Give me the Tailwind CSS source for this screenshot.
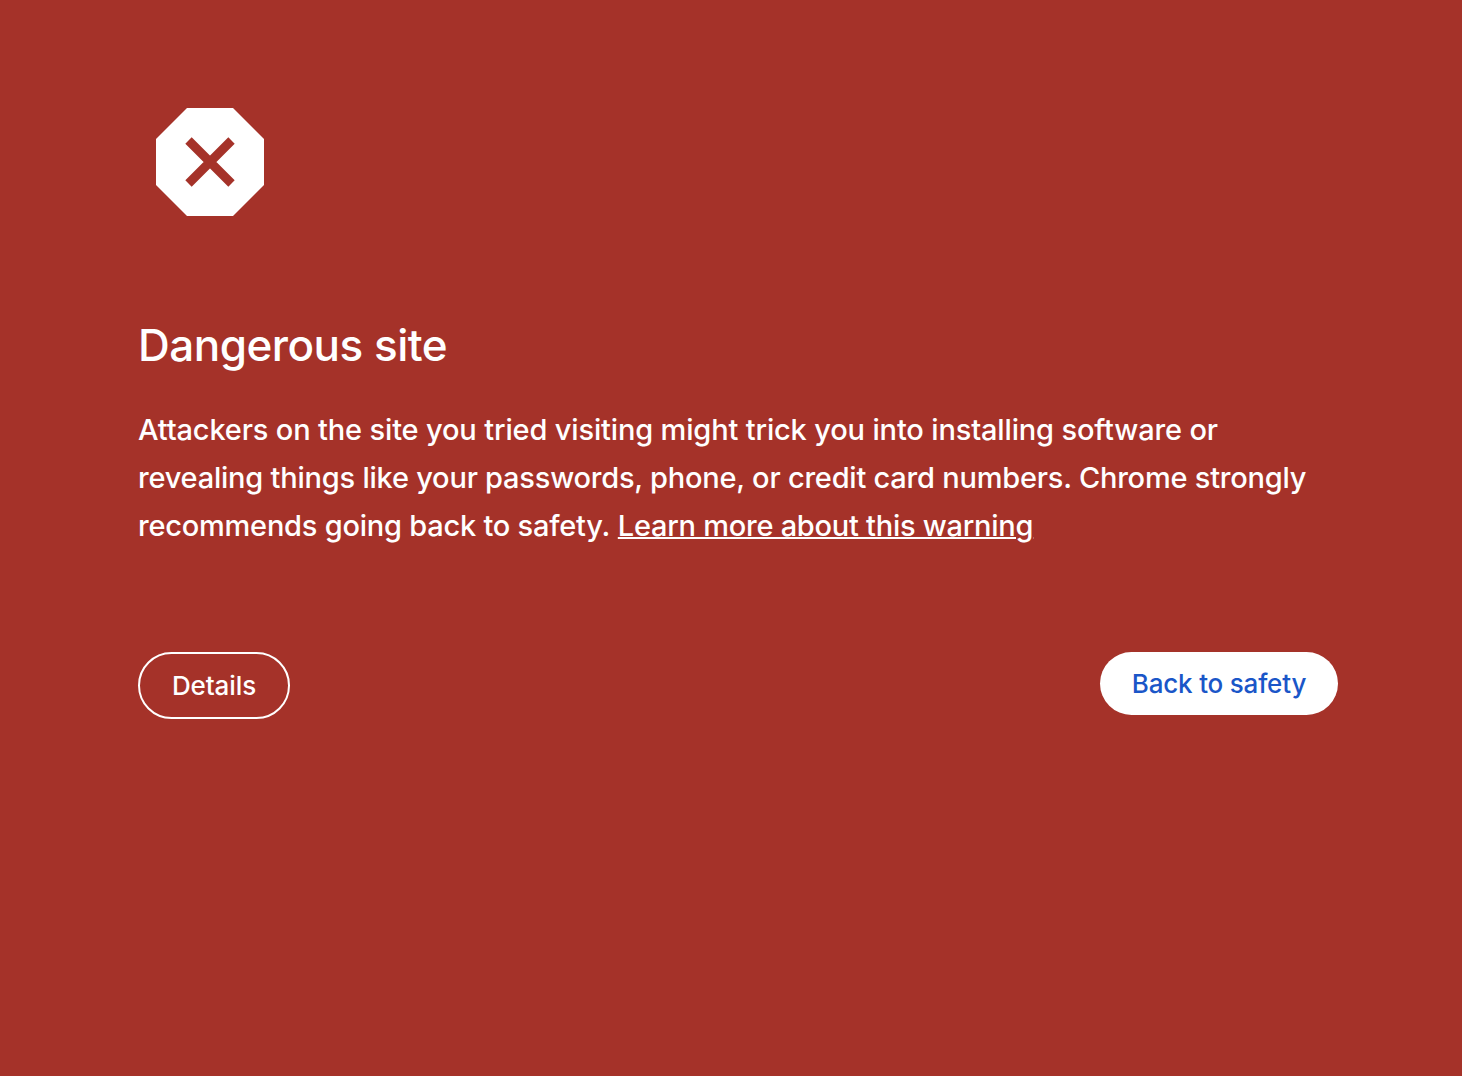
<!DOCTYPE html>
<html lang="en">
  <head>
    <meta charset="UTF-8" />
    <title>Security error</title>
    <script src="https://cdn.jsdelivr.net/npm/@tailwindcss/browser@4"></script>
  </head>
  <body class="bg-[#a53229] h-screen overflow-hidden font-['Inter',sans-serif] text-white">
    <div class="w-[1200px] ml-[138px] pt-[108px]">
      <svg class="ml-[18px] w-[108px] h-[108px]" viewBox="0 0 108 108">
        <polygon points="31,0 77,0 108,31 108,77 77,108 31,108 0,77 0,31" fill="#fff" />
        <path d="M32.5 32.5 L75.5 75.5 M75.5 32.5 L32.5 75.5" stroke="#a53229" stroke-width="9" fill="none" />
      </svg>
      <h1 class="mt-[101px] text-[44px] leading-[56px] font-[450] tracking-[-0.5px]">Dangerous site</h1>
      <p class="mt-[33px] text-[29px] leading-[48px] whitespace-nowrap font-[450]">
        <span class="tracking-[-0.155px]">Attackers on the site you tried visiting might trick you into installing software or</span><br />
        <span class="tracking-[-0.225px]">revealing things like your passwords, phone, or credit card numbers. Chrome strongly</span><br />
        <span class="tracking-[-0.23px]">recommends going back to safety.</span>
        <a href="#" class="underline decoration-2 tracking-[-0.255px]">Learn more about this warning</a>
      </p>
      <div class="mt-[102px] flex justify-between items-start">
        <button class="h-[67px] w-[152px] rounded-[34px] border-2 border-white text-[26px] font-[450] tracking-[-0.1px]">Details</button>
        <button class="h-[63px] w-[238px] rounded-[32px] bg-white text-[#1a56c8] text-[26px] font-[450] tracking-[-0.2px]">Back to safety</button>
      </div>
    </div>
  </body>
</html>
